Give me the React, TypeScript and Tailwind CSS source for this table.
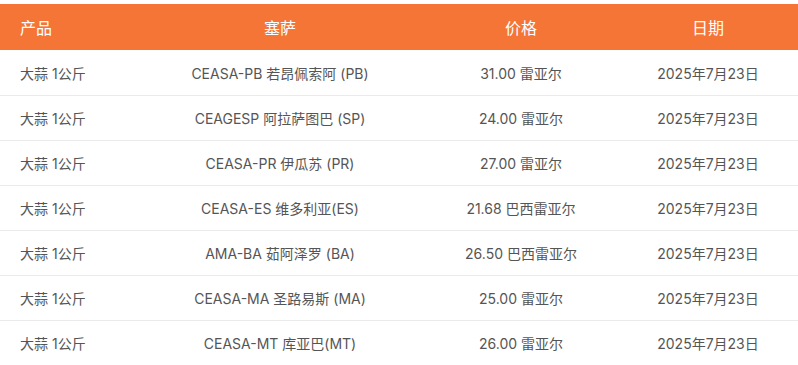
import React from "react";

const rows = [
  ["大蒜 1公斤", "CEASA-PB 若昂佩索阿 (PB)", "31.00 雷亚尔", "2025年7月23日"],
  ["大蒜 1公斤", "CEAGESP 阿拉萨图巴 (SP)", "24.00 雷亚尔", "2025年7月23日"],
  ["大蒜 1公斤", "CEASA-PR 伊瓜苏 (PR)", "27.00 雷亚尔", "2025年7月23日"],
  ["大蒜 1公斤", "CEASA-ES 维多利亚(ES)", "21.68 巴西雷亚尔", "2025年7月23日"],
  ["大蒜 1公斤", "AMA-BA 茹阿泽罗 (BA)", "26.50 巴西雷亚尔", "2025年7月23日"],
  ["大蒜 1公斤", "CEASA-MA 圣路易斯 (MA)", "25.00 雷亚尔", "2025年7月23日"],
  ["大蒜 1公斤", "CEASA-MT 库亚巴(MT)", "26.00 雷亚尔", "2025年7月23日"],
];

export default function App() {
  return (
    <div
      className="w-[798px] h-[365px] bg-white pt-[4px] overflow-hidden"
      style={{ fontFamily: 'Inter, "Noto Sans CJK SC", sans-serif' }}
    >
      <table className="w-[798px] border-collapse table-fixed">
        <colgroup>
          <col className="w-[136px]" />
          <col className="w-[288px]" />
          <col className="w-[194px]" />
          <col className="w-[180px]" />
        </colgroup>
        <thead>
          <tr className="bg-[#f47535] text-white h-[46px] text-[16px] font-normal">
            <th className="text-left pl-[20px] pt-[2px] font-normal">产品</th>
            <th className="text-center pt-[2px] font-normal">塞萨</th>
            <th className="text-center pt-[2px] font-normal">价格</th>
            <th className="text-center pt-[2px] font-normal">日期</th>
          </tr>
        </thead>
        <tbody>
          {rows.map((r, i) => (
            <tr key={i} className="h-[45px] border-b border-[#ebebeb] text-[14px] text-[#555555]">
              <td className="text-left pl-[20px] pt-[2px]">{r[0]}</td>
              <td className="text-center pt-[2px]">{r[1]}</td>
              <td className="text-center pt-[2px]">{r[2]}</td>
              <td className="text-center pt-[2px]">{r[3]}</td>
            </tr>
          ))}
        </tbody>
      </table>
    </div>
  );
}
